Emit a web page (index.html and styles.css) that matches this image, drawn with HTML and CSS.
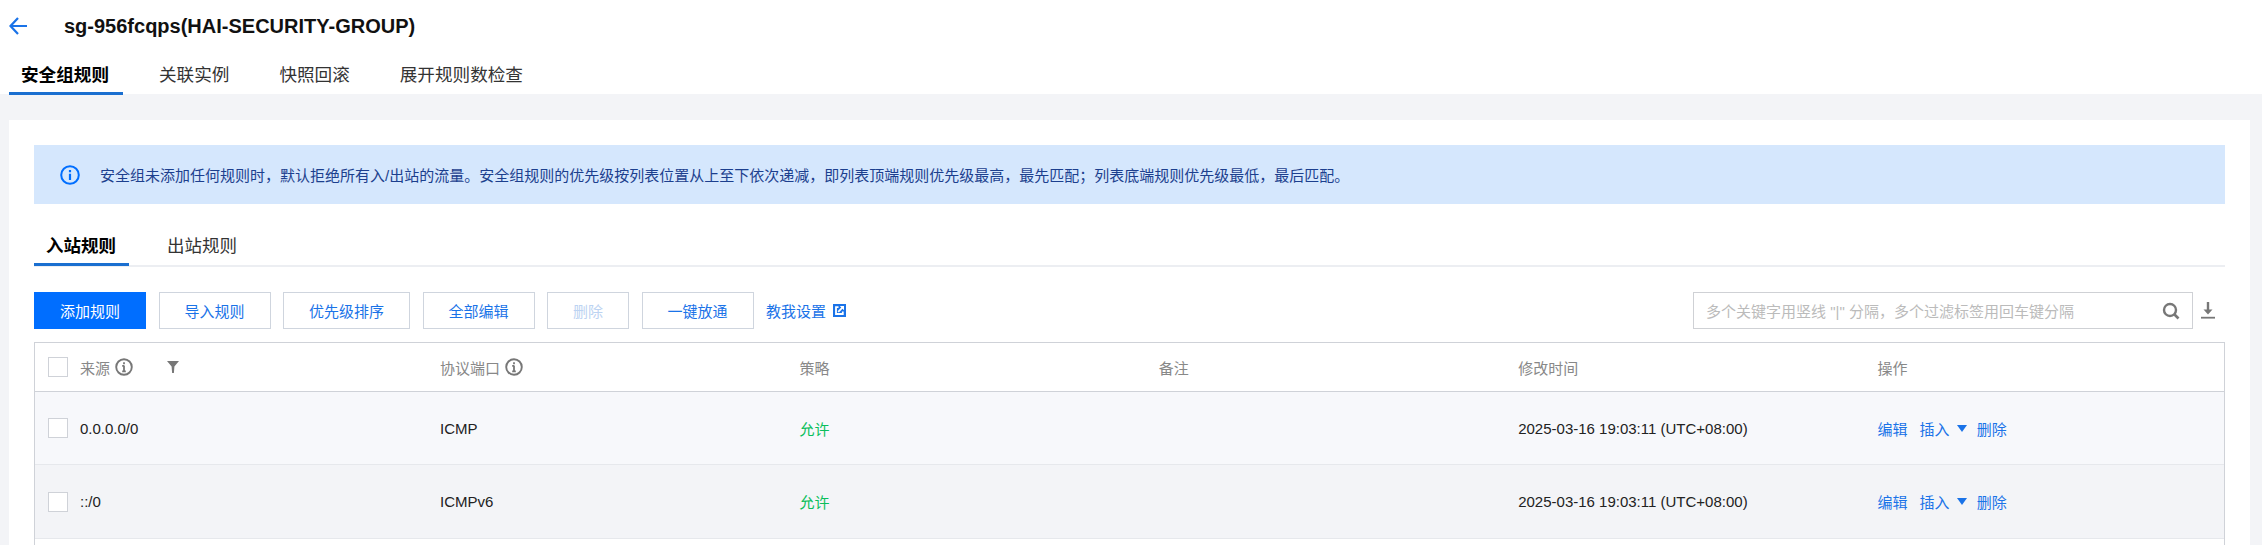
FILE: index.html
```html
<!DOCTYPE html>
<html lang="zh-CN">
<head>
<meta charset="utf-8">
<title>sg-956fcqps</title>
<link rel="stylesheet" href="styles.css">
</head>
<body>
<header class="top">
  <div class="title-row">
    <svg class="back" width="19" height="18" viewBox="0 0 19 18"><path d="M9 1 1.5 9 9 17M2 9h16" fill="none" stroke="#1a73e8" stroke-width="2.2"/></svg>
    <h1 class="title">sg-956fcqps(HAI-SECURITY-GROUP)</h1>
  </div>
  <nav class="tabs">
    <a class="tab active">安全组规则</a>
    <a class="tab">关联实例</a>
    <a class="tab">快照回滚</a>
    <a class="tab">展开规则数检查</a>
  </nav>
</header>
<main class="card">
  <div class="banner">
    <svg class="banner-icon" width="20" height="20" viewBox="0 0 20 20"><circle cx="10" cy="10" r="8.8" fill="none" stroke="#006eff" stroke-width="2"/><path d="M10 5v2.2M10 8.8V15" stroke="#006eff" stroke-width="2.2" fill="none"/></svg>
    <span>安全组未添加任何规则时，默认拒绝所有入/出站的流量。安全组规则的优先级按列表位置从上至下依次递减，即列表顶端规则优先级最高，最先匹配；列表底端规则优先级最低，最后匹配。</span>
  </div>
  <nav class="subtabs">
    <a class="subtab active">入站规则</a>
    <a class="subtab">出站规则</a>
  </nav>
  <div class="toolbar">
    <button class="btn primary">添加规则</button>
    <button class="btn">导入规则</button>
    <button class="btn">优先级排序</button>
    <button class="btn">全部编辑</button>
    <button class="btn disabled">删除</button>
    <button class="btn">一键放通</button>
    <a class="help">教我设置
      <svg class="help-icon" width="13" height="13" viewBox="0 0 13 13"><rect width="13" height="13" fill="#1a73e8"/><path d="M5.5 3.2H3v6.8h6.8V7.5" fill="none" stroke="#fff" stroke-width="1.8"/><path d="M5.2 7.8 9.6 3.4" fill="none" stroke="#fff" stroke-width="1.8"/><path d="M6.8 2h4.2v4.2z" fill="#fff"/></svg>
    </a>
    <div class="search">
      <span class="placeholder">多个关键字用竖线 "|" 分隔，多个过滤标签用回车键分隔</span>
      <svg width="18" height="18" viewBox="0 0 18 18"><circle cx="8" cy="8" r="6" fill="none" stroke="#777" stroke-width="2.4"/><path d="m12 12 4.5 4.5" stroke="#777" stroke-width="2.6"/></svg>
    </div>
    <svg class="download" width="14" height="17" viewBox="0 0 14 17"><path d="M7 0v10" stroke="#777" stroke-width="2.4"/><path d="M2.5 7.5h9L7 12.5z" fill="#777"/><path d="M0 15.7h14" stroke="#777" stroke-width="1.8"/></svg>
  </div>
  <div class="table">
    <div class="row head">
      <div class="cell"><span class="check"></span>来源
        <svg class="info" width="18" height="18" viewBox="0 0 18 18"><circle cx="9" cy="9" r="7.8" fill="none" stroke="#777" stroke-width="1.9"/><path d="M9 4.2v2M9 7.6V14M7.2 7.9H9M7.2 13.4h3.6" stroke="#777" stroke-width="1.8" fill="none"/></svg>
        <svg class="filter" width="12" height="12" viewBox="0 0 12 12"><path d="M0 0h12L7.4 5.4 6.9 12H5.1L4.6 5.4z" fill="#777"/></svg>
      </div>
      <div class="cell">协议端口
        <svg class="info" width="18" height="18" viewBox="0 0 18 18"><circle cx="9" cy="9" r="7.8" fill="none" stroke="#777" stroke-width="1.9"/><path d="M9 4.2v2M9 7.6V14M7.2 7.9H9M7.2 13.4h3.6" stroke="#777" stroke-width="1.8" fill="none"/></svg>
      </div>
      <div class="cell">策略</div>
      <div class="cell">备注</div>
      <div class="cell">修改时间</div>
      <div class="cell">操作</div>
    </div>
    <div class="row body light">
      <div class="cell"><span class="check"></span>0.0.0.0/0</div>
      <div class="cell">ICMP</div>
      <div class="cell allow">允许</div>
      <div class="cell"></div>
      <div class="cell">2025-03-16 19:03:11 (UTC+08:00)</div>
      <div class="cell actions"><a>编辑</a><a class="insert">插入<i class="caret"></i></a><a>删除</a></div>
    </div>
    <div class="row body dark">
      <div class="cell"><span class="check"></span>::/0</div>
      <div class="cell">ICMPv6</div>
      <div class="cell allow">允许</div>
      <div class="cell"></div>
      <div class="cell">2025-03-16 19:03:11 (UTC+08:00)</div>
      <div class="cell actions"><a>编辑</a><a class="insert">插入<i class="caret"></i></a><a>删除</a></div>
    </div>
  </div>
</main>
</body>
</html>
```
FILE: styles.css
```css
* { box-sizing: border-box; }
html, body { margin: 0; height: 545px; overflow: hidden; }
body {
  background: #f3f4f7;
  color: #1f2329;
  font-family: "Liberation Sans", "Noto Sans CJK SC", sans-serif;
  font-size: 15px;
}
.top { background: #fff; height: 94px; padding-left: 9px; }
.title-row { display: flex; align-items: center; height: 52px; }
.back { flex: none; }
.title { margin: 0 0 0 36px; font-size: 20px; font-weight: 700; color: #111; }
.tabs { display: flex; gap: 26px; height: 43px; }
.tab {
  padding: 0 12px;
  height: 43px;
  line-height: 46px;
  font-size: 17.6px;
  color: #333;
  white-space: nowrap;
}
.tab.active { padding-right: 14px; margin-right: -2px; font-weight: 700; color: #000; border-bottom: 3px solid #1a6fd0; }
.card {
  display: flex;
  flex-direction: column;
  margin: 26px 12px 0 9px;
  height: 425px;
  background: #fff;
  padding: 25px 25px 0;
}
.banner {
  display: flex;
  align-items: center;
  flex: none;
  height: 59px;
  padding-left: 26px;
  gap: 20px;
  background: #d5e7fd;
  color: #1c3f8e;
}
.banner-icon { flex: none; }
.subtabs { display: flex; flex: none; gap: 27px; height: 63px; padding-top: 21px; border-bottom: 2px solid #eceef2; }
.subtab { padding: 0 12px; height: 41px; line-height: 42px; font-size: 17.5px; color: #333; }
.subtab.active { padding-right: 13px; margin-right: -1px; font-weight: 700; color: #000; border-bottom: 3px solid #1a6fd0; }
.toolbar { display: flex; flex: none; align-items: center; height: 37px; margin-top: 25px; }
.btn {
  height: 37px;
  padding: 0 25px;
  margin-right: 12.5px;
  border: 1px solid #cfd5de;
  background: #fff;
  color: #1a73e8;
  font: inherit;
  white-space: nowrap;
}
.btn.primary { background: #006eff; border-color: #006eff; color: #fff; }
.btn.disabled { color: #bcd3f2; }
.help { display: flex; align-items: center; gap: 7px; color: #1a73e8; }
.search {
  display: flex;
  align-items: center;
  justify-content: space-between;
  width: 500px;
  height: 37px;
  margin-left: auto;
  padding: 0 12px;
  border: 1px solid #cfd1d5;
}
.placeholder { color: #bbb; white-space: nowrap; }
.download { margin: 0 10px 0 8px; flex: none; }
.table { flex: 1; margin-top: 13px; border: 1px solid #cfd2d8; border-bottom: 0; }
.row { display: grid; grid-template-columns: 392px repeat(5, 1fr); align-items: center; }
.head { height: 49px; color: #888; border-bottom: 1px solid #cfd2d8; background: #fff; }
.body { height: 73px; border-bottom: 1px solid #e6e8ec; color: #222; }
.light { background: #f7f8fb; }
.dark { background: #f3f4f7; height: 74px; }
.cell { display: flex; align-items: center; padding-left: 13px; white-space: nowrap; }
.check { width: 20px; height: 20px; margin-right: 12px; background: #fff; border: 1px solid #cfd2d8; flex: none; }
.info { margin-left: 5px; flex: none; }
.filter { margin-left: 34px; flex: none; }
.allow { color: #0abf5b; }
.actions { color: #1a73e8; gap: 12px; }
.insert { display: flex; align-items: center; margin-right: -2px; }
.caret {
  width: 0;
  height: 0;
  margin-left: 7px;
  border-left: 5px solid transparent;
  border-right: 5px solid transparent;
  border-top: 7px solid #1a73e8;
}
```
